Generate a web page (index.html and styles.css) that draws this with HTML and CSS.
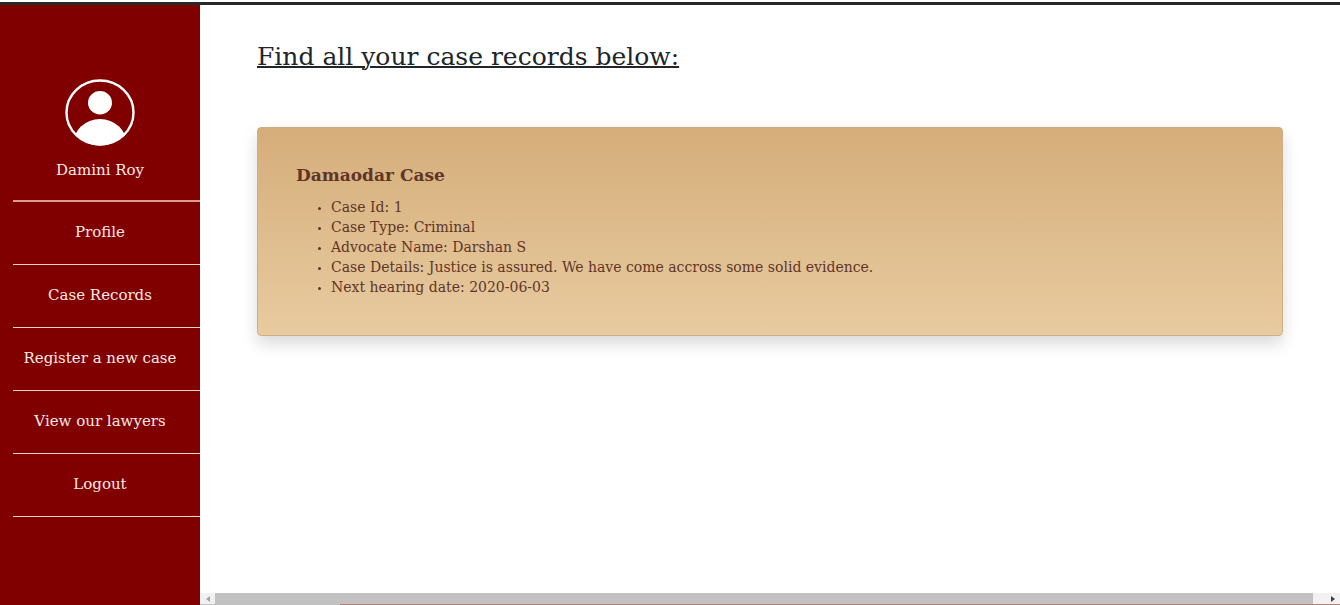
FILE: index.html
```html
<!DOCTYPE html>
<html lang="en">
<head>
<meta charset="utf-8">
<title>Case Records</title>
<link rel="stylesheet" href="styles.css">
</head>
<body>
<div class="topline"></div>
<div class="layout">
  <nav class="sidebar">
    <div class="user">
      <svg class="avatar" viewBox="0 0 70 68" aria-hidden="true">
        <defs><clipPath id="ring"><ellipse cx="35" cy="34.5" rx="34" ry="33"/></clipPath></defs>
        <ellipse cx="35" cy="24.7" rx="12" ry="11.7" fill="#fff"/>
        <ellipse cx="35" cy="67" rx="27" ry="26" fill="#fff" clip-path="url(#ring)"/>
        <ellipse cx="35" cy="34.5" rx="33.5" ry="32" fill="none" stroke="#fff" stroke-width="2.4"/>
      </svg>
      <span class="name">Damini Roy</span>
    </div>
    <ul class="menu">
      <li><a href="#profile">Profile</a></li>
      <li><a href="#records">Case Records</a></li>
      <li><a href="#register">Register a new case</a></li>
      <li><a href="#lawyers">View our lawyers</a></li>
      <li><a href="#logout">Logout</a></li>
    </ul>
  </nav>
  <div class="pane">
    <main class="content">
      <h1 class="title">Find all your case records below:</h1>
      <article class="card">
        <h2 class="card-title">Damaodar Case</h2>
        <ul class="details">
          <li>Case Id: 1</li>
          <li>Case Type: Criminal</li>
          <li>Advocate Name: Darshan S</li>
          <li>Case Details: Justice is assured. We have come accross some solid evidence.</li>
          <li>Next hearing date: 2020-06-03</li>
        </ul>
      </article>
    </main>
    <div class="scrollbar">
      <button class="arrow" type="button" aria-label="Scroll left"><svg width="4" height="6" viewBox="0 0 4 6"><path d="M4 0v6L0 3z" fill="#a3a3a3"/></svg></button>
      <div class="thumb"></div>
      <button class="arrow arrow-right" type="button" aria-label="Scroll right"><svg width="4" height="6" viewBox="0 0 4 6"><path d="M0 0v6l4-3z" fill="#404040"/></svg></button>
    </div>
  </div>
</div>
</body>
</html>
```
FILE: styles.css
```css
* { box-sizing: border-box; }

body {
  margin: 0;
  min-height: 100vh;
  display: flex;
  flex-direction: column;
  background: #fff;
  color: #212529;
  font-family: "DejaVu Serif", "Liberation Serif", serif;
}

.topline {
  height: 5px;
  border-top: 2px solid #fff;
  background: #28282c;
}

.layout {
  flex: 1;
  display: flex;
}

.sidebar {
  width: 200px;
  flex-shrink: 0;
  padding: 73px 0 0 13px;
  background: #800000;
  color: #f8e8e4;
  font-size: 15px;
  line-height: 20px;
}

.user {
  display: flex;
  flex-direction: column;
  align-items: center;
  gap: 14px;
  padding: 0 13px 20px 0;
  border-bottom: 2px solid #e09a94;
}

.avatar {
  width: 70px;
  height: 68px;
}

.menu {
  margin: 0;
  padding: 0;
  list-style: none;
}

.menu a {
  display: block;
  padding: 20px 13px 22px 0;
  border-bottom: 1px solid #f4d4cc;
  color: inherit;
  text-align: center;
  text-decoration: none;
  white-space: nowrap;
}

.pane {
  flex: 1;
  min-width: 0;
  display: flex;
  flex-direction: column;
}

.content {
  flex: 1;
  padding: 36px 57px 0;
}

.title {
  margin: 0 0 54px;
  font-size: 25px;
  line-height: 32px;
  font-weight: 400;
  text-decoration: underline;
  text-decoration-thickness: 2px;
}

.card {
  padding: 35px 38px 38px;
  border: 1px solid #cfae86;
  border-radius: 4px;
  background: linear-gradient(#d5ad7a, #e8cba0);
  box-shadow: 0 8px 16px rgba(0, 0, 0, 0.15);
  color: #5f3527;
}

.card-title {
  margin: 0 0 10px;
  font-size: 17px;
  line-height: 24px;
  font-weight: 700;
}

.details {
  margin: 0;
  padding-left: 35px;
  font-size: 14px;
  line-height: 20px;
}

.details li::marker {
  font-size: 10px;
}

.scrollbar {
  display: flex;
  height: 12px;
  padding-bottom: 1px;
  background: linear-gradient(to right, #c1c1c1 140px, #b5827a 140px);
}

.arrow {
  width: 15px;
  padding: 0;
  border: 0;
  background: #f1f1f1;
  display: flex;
  align-items: center;
  justify-content: center;
}

.arrow-right {
  width: 27px;
  padding-left: 12px;
}

.thumb {
  flex: 1;
  background: #c1c1c1;
}
```
